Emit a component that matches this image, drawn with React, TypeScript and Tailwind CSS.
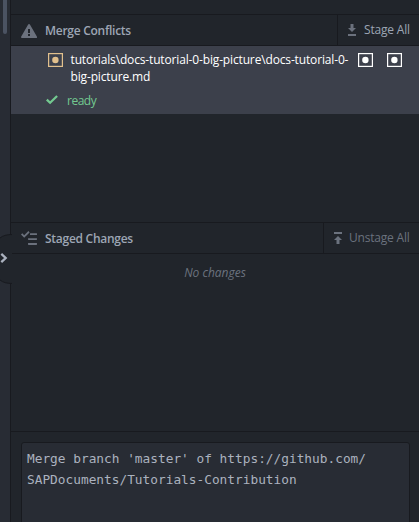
import React from 'react';

const DotSquare = ({ className }: { className: string }) => (
  <svg className={className} width="15" height="14" viewBox="0 0 15 14" fill="none">
    <rect x="0.6" y="0.6" width="13.8" height="12.8" stroke="currentColor" strokeWidth="1.2" />
    <circle cx="7.4" cy="7" r="3.2" fill="currentColor" />
  </svg>
);

type HeaderProps = { icon: React.ReactNode; title: string; titleClass: string; action: React.ReactNode };

const SectionHeader = ({ icon, title, titleClass, action }: HeaderProps) => (
  <header className="flex h-8 shrink-0 items-stretch border-y border-[#181a1f]">
    <div className="flex min-w-0 flex-1 items-center pl-2.5">
      {icon}
      <h2 className={`ml-2 whitespace-nowrap pt-0.5 text-[12px] font-semibold leading-[18px] text-[#9da5b4] ${titleClass}`}>{title}</h2>
    </div>
    {action}
  </header>
);

export default function App() {
  return (
    <div className="relative flex h-[522px] w-[419px] overflow-hidden bg-[#21252b] font-['Open_Sans','Noto_Sans',sans-serif] text-[12px] text-[#9da5b4]">
      <aside className="w-[11px] shrink-0 border-r border-[#181a1f] bg-[#282c34] pl-[3px]">
        <div className="h-[34px] w-1 rounded-b-full bg-[#4b5362]" />
      </aside>

      <main className="flex min-w-0 flex-1 flex-col">
        <div className="h-3.5 shrink-0" />
        <SectionHeader
          title="Merge Conflicts"
          titleClass="tracking-[-0.27px]"
          icon={
            <svg className="mt-px text-[#6b717d]" width="16" height="16" viewBox="0 0 16 16" fill="currentColor">
              <path fillRule="evenodd" d="M8.9 1.5a1 1 0 0 0-1.75 0l-6.9 12A1 1 0 0 0 1.1 15H15a1 1 0 0 0 .86-1.5zM9 13H7v-2h2zm0-3H7V6h2z" />
            </svg>
          }
          action={
            <button className="flex w-[82px] items-center whitespace-nowrap border-l border-[#181a1f] pl-2 text-[12px] leading-[18px] tracking-[-0.18px]">
              <svg className="text-[#6b717d]" width="12" height="16" viewBox="0 0 12 16" fill="currentColor">
                <path d="M4.500 2h3v4H10l-4 4-4-4h2.500zM2 12h8v2H2z" />
              </svg>
              <span className="ml-[6px]">Stage All</span>
            </button>
          }
        />
        <section className="h-[176px] shrink-0">
          <div className="h-[68px] bg-[#3c404b]">
            <div className="flex pt-[5px]">
              <DotSquare className="ml-[37px] mt-[2px] shrink-0 text-[#e2c08d]" />
              <p className="ml-[7.5px] w-[281.5px] whitespace-nowrap text-[12px] leading-[17px] tracking-[-0.15px] text-white">
                tutorials\docs-tutorial-0-big-picture\docs-tutorial-0-<br />big-picture.md
              </p>
              <DotSquare className="ml-[6px] mt-[2px] shrink-0 text-white" />
              <DotSquare className="ml-[14px] mt-[2px] shrink-0 text-white" />
            </div>
            <div className="mt-[7px] flex items-center pl-[34px] text-[#73c990]">
              <svg className="-mt-0.5" width="13" height="16" viewBox="0 0 13 16" fill="currentColor">
                <path d="m12.900 4.800-7.800 7.500L1 8.400l1.600-1.600 2.500 2.500 6.200-6.100z" />
              </svg>
              <span className="ml-[9px] leading-[17px] tracking-[-0.5px]">ready</span>
            </div>
          </div>
        </section>
        <SectionHeader
          title="Staged Changes"
          titleClass="tracking-[-0.27px]"
          icon={
            <svg className="mt-0.5 text-[#6b717d]" width="16" height="16" viewBox="0 0 16 16" fill="currentColor">
              <path d="M16 8.1c0 .6 0 .9-.6.9H7.600c-.6 0-.6-.3-.6-.9s0-.9.6-.9h7.800c.6 0 .6.3.6.9m-6.400-4h5.800c.6 0 .6-.3.6-.9s0-.9-.6-.9H9.600c-.6 0-.6.3-.6.9s0 .9.6.9M0 3.500l3.200 3.300L8.600 1.400 7.400.1 3.200 4.300 1.300 2.300zm15.400 8.600H7.600c-.6 0-.6.3-.6.9s0 .9.6.9h7.800c.6 0 .6-.3.6-.9s0-.9-.6-.9" />
            </svg>
          }
          action={
            <button className="flex w-24 items-center whitespace-nowrap border-l border-[#181a1f] pl-2 text-[12px] leading-[18px] tracking-[-0.2px] text-[#6b727e]">
              <svg width="12" height="16" viewBox="0 0 12 16" fill="currentColor">
                <path d="M2 2h8v2H2zM4.500 14v-4H2l4-4 4 4H7.500v4z" />
              </svg>
              <span className="ml-[5px]">Unstage All</span>
            </button>
          }
        />
        <section className="h-[177px] shrink-0 pt-[10px] text-center text-[12px] italic leading-[18px] text-[#6b727e]">
          No changes
        </section>
        <footer className="flex-1 border-t border-[#181a1f] px-2.5 pt-2.5">
          <div className="h-[100px] w-[389px] rounded-t-[3px] border border-[#181a1f] bg-[#282c34] pl-[5px] pt-[5px] font-['DejaVu_Sans_Mono',monospace] text-[12.8px] leading-[21px] text-[#abb2bf]">
            Merge branch 'master' of https://github.com/<br />SAPDocuments/Tutorials-Contribution
          </div>
        </footer>
      </main>

      <button className="absolute left-0 top-[234px] h-[50px] w-3" aria-label="Toggle dock">
        <svg width="12" height="50" viewBox="0 0 12 50" fill="none">
          <path d="M12 .5C7 .5 3 1.500 0 4v42c3 2.500 7 3.500 12 3.500z" fill="#21252b" />
          <path d="M12 .5C7 .5 3 1.500 0 4M0 46c3 2.500 7 3.500 12 3.500" stroke="#181a1f" />
          <path d="m1.300 19.800 4.400 4.200-4.400 4.200" stroke="#abb2bf" strokeWidth="2.300" />
        </svg>
      </button>
    </div>
  );
}
